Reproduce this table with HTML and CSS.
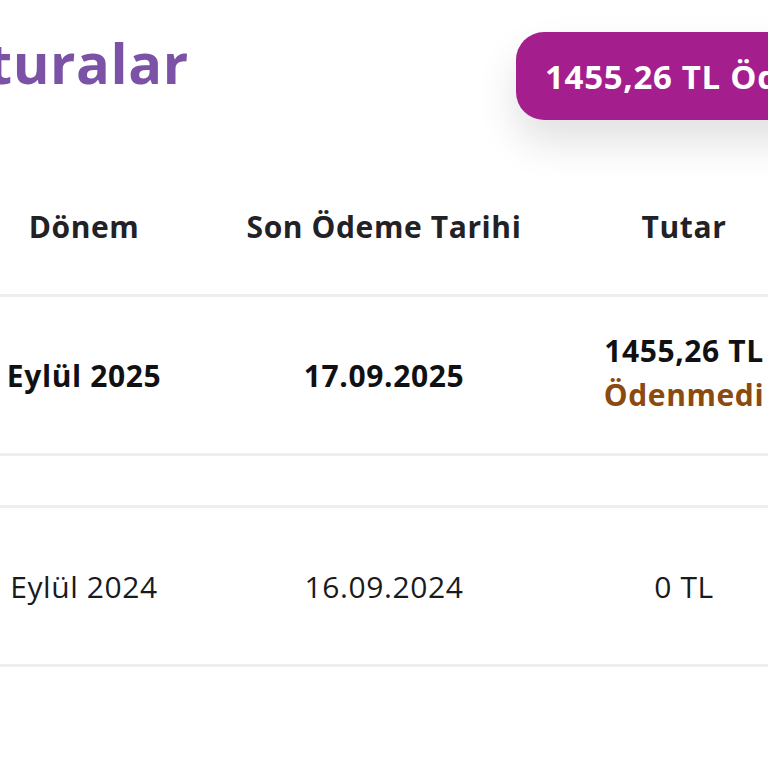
FILE: index.html
```html
<!DOCTYPE html>
<html lang="tr">
<head>
<meta charset="utf-8">
<title>Faturalar</title>
<link rel="stylesheet" href="styles.css">
</head>
<body>
<div class="page">
  <header class="top">
    <div class="title-box"><h1 class="title">Faturalar</h1></div>
    <button class="pay">1455,26 TL Ödemesi Yap</button>
  </header>
  <div class="table">
    <div class="row head">
      <div class="cell">Dönem</div>
      <div class="cell">Son Ödeme Tarihi</div>
      <div class="cell">Tutar</div>
    </div>
    <div class="row item strong">
      <div class="cell">Eylül 2025</div>
      <div class="cell">17.09.2025</div>
      <div class="cell stack"><span>1455,26 TL</span><span class="unpaid">Ödenmedi</span></div>
    </div>
    <div class="row spacer"></div>
    <div class="row item">
      <div class="cell">Eylül 2024</div>
      <div class="cell">16.09.2024</div>
      <div class="cell">0 TL</div>
    </div>
  </div>
</div>
</body>
</html>
```
FILE: styles.css
```css
html, body {
  margin: 0;
  padding: 0;
  background: #ffffff;
  overflow: hidden;
}
body {
  width: 768px;
  height: 768px;
  font-family: "Open Sans", "DejaVu Sans", sans-serif;
  color: #1f1f22;
}
.page {
  width: 900px;
  margin-left: -66px;
}
.top {
  display: grid;
  grid-template-columns: 582px auto;
  align-items: center;
  padding-top: 32px;
  height: 88px;
}
.title-box {
  overflow: visible;
  white-space: nowrap;
}
.title {
  margin: 0 0 28px 0;
  font-size: 56px;
  line-height: 56px;
  font-weight: 700;
  color: #7b52a6;
  letter-spacing: 0.6px;
  text-align: left;
  margin-left: -12px;
}
.pay {
  justify-self: start;
  height: 88px;
  padding: 0 29px;
  border: none;
  border-radius: 28px;
  background: #a41e8d;
  color: #ffffff;
  font-family: inherit;
  font-size: 33px;
  font-weight: 700;
  letter-spacing: 0.7px;
  white-space: nowrap;
  box-shadow: 0 22px 40px rgba(0, 0, 0, 0.12);
}
.table {
  margin-top: 38px;
}
.row {
  display: grid;
  grid-template-columns: 300px 300px 300px;
  align-items: center;
  border-bottom: 3px solid #eeeeee;
}
.cell {
  text-align: center;
  font-size: 30px;
  letter-spacing: 0.6px;
}
.head {
  height: 136px;
}
.head .cell {
  font-weight: 700;
  color: #222226;
}
.item {
  height: 156px;
}
.item .cell {
  font-weight: 400;
  color: #1a1a1d;
}
.strong .cell {
  font-weight: 700;
  color: #111114;
}
.spacer {
  height: 49px;
}
.stack {
  display: flex;
  flex-direction: column;
  align-items: center;
  gap: 3px;
  margin-top: -5px;
}
.strong .unpaid {
  color: #8b4a10;
}
```
